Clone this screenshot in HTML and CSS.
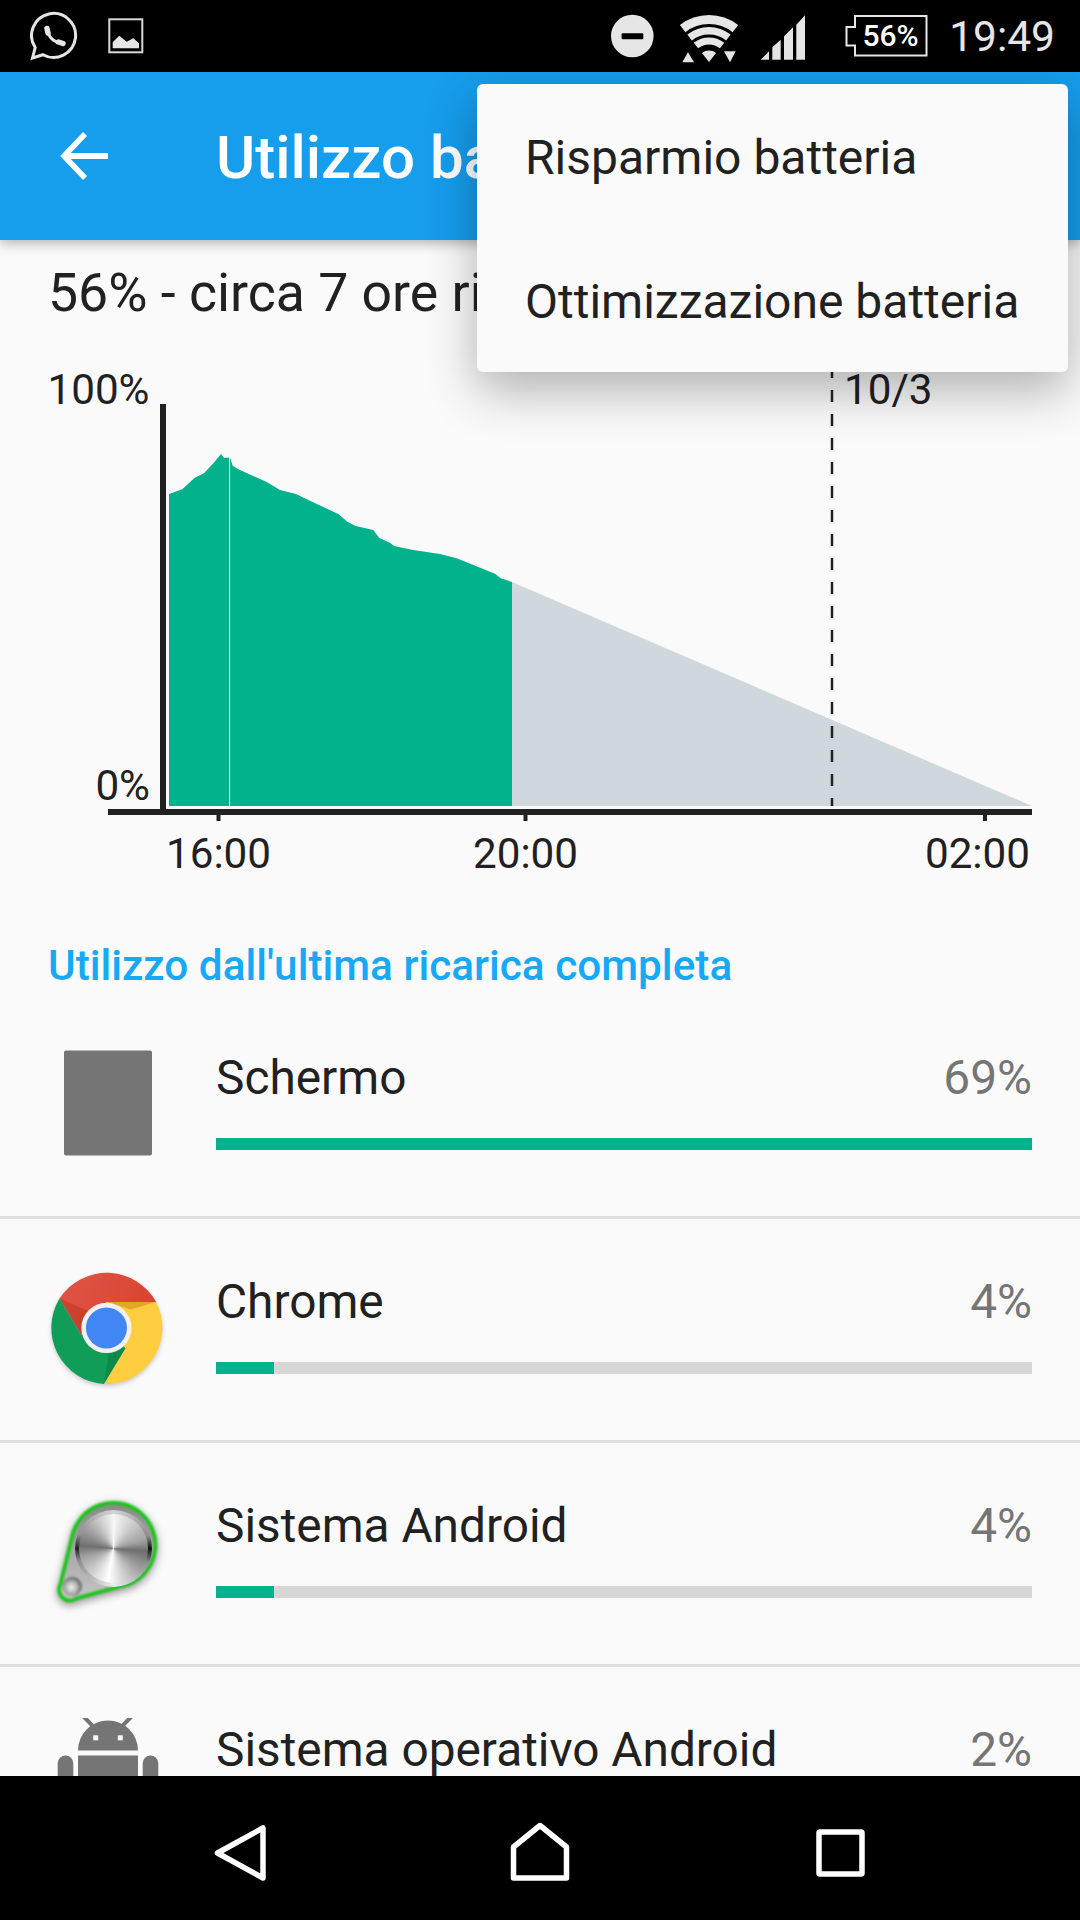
FILE: index.html
```html
<!DOCTYPE html>
<html>
<head>
  <meta charset="utf-8">
  <link rel="stylesheet" href="styles.css">
</head>
<body>
  <div class="screen">

    <!-- Status bar -->
    <div class="status-bar">
      <svg class="st-icon" width="48" height="56" viewBox="30 8 48 56">
        <path d="M32.5 58 L35.2 47.5 A22 22 0 1 1 43 54.7 Z" fill="none" stroke="#e6e6e6" stroke-width="3" stroke-linejoin="miter"/>
        <path d="M47.5 29.5 C48 37 54 42.5 62 43" fill="none" stroke="#e6e6e6" stroke-width="3"/>
        <path d="M47 28.5 L48 33 M58.5 42 L63 43.5" stroke="#e6e6e6" stroke-width="5.5" stroke-linecap="round"/>
      </svg>
      <svg class="st-icon st-image" width="36" height="56" viewBox="108 8 36 56">
        <rect x="109.3" y="19.3" width="33" height="33" fill="none" stroke="#d8d8d8" stroke-width="2"/>
        <path d="M112.7 48.3 V42.3 L119.3 35.7 L126.7 41.7 L133.3 38.3 L139 43.3 V48.3 Z" fill="#e6e6e6"/>
      </svg>

      <svg class="st-icon st-dnd" width="44" height="56" viewBox="611 8 44 56">
        <circle cx="633.3" cy="36" r="21.3" fill="#e6e6e6"/>
        <rect x="622.6" y="33.3" width="21.7" height="6" rx="1" fill="#000"/>
      </svg>
      <svg class="st-icon st-wifi" width="60" height="56" viewBox="680 8 60 56" fill="#e6e6e6">
        <path d="M680.9 25.1 A47 47 0 0 1 739.1 25.1 L733.6 32.2 A38 38 0 0 0 686.4 32.2 Z"/>
        <path d="M688.3 34.5 A35 35 0 0 1 731.7 34.5 L727.1 40.4 A27.5 27.5 0 0 0 692.9 40.4 Z"/>
        <path d="M694.8 42.8 A24.5 24.5 0 0 1 725.2 42.8 L720.9 48.3 A17.5 17.5 0 0 0 699.1 48.3 Z"/>
        <path d="M702.9 53 A11.5 11.5 0 0 1 717.1 53 L710 62 Z"/>
        <path d="M683.3 62.3 H695 L689 52.3 Z"/>
        <path d="M725 51.3 H736.7 L731 62.3 Z"/>
      </svg>
      <svg class="st-icon st-signal" width="46" height="56" viewBox="761 8 46 56" fill="#e6e6e6">
        <path d="M761.7 59.7 L770 51.3 V59.7 Z"/>
        <path d="M773.3 59.7 V47.3 L781.7 39.7 V59.7 Z"/>
        <path d="M785 59.7 V36.3 L794 27.3 V59.7 Z"/>
        <path d="M797.3 59.7 V24.7 L806 15.3 V59.7 Z"/>
      </svg>
      <svg class="st-icon st-battery" width="84" height="56" viewBox="846 8 84 56">
        <path d="M856 16 H927.5 V55.5 H856 V45.5 H847.5 V27 H856 Z" fill="none" stroke="#e6e6e6" stroke-width="2"/>
        <text class="battery-text" x="891.5" y="46" text-anchor="middle">56%</text>
      </svg>
      <div class="clock">19:49</div>
    </div>

    <!-- App bar -->
    <div class="app-bar">
      <svg class="back-arrow" width="72" height="72" viewBox="48 120 72 72">
        <path d="M108 156 H66" fill="none" stroke="#fff" stroke-width="6"/>
        <path d="M85 134 L64 156 L85 178" fill="none" stroke="#fff" stroke-width="5.5"/>
      </svg>
      <div class="app-title">Utilizzo batteria</div>
    </div>

    <div class="content">
      <div class="summary">56% - circa 7 ore rimanenti</div>

      <!-- Battery chart, viewBox uses screen coords -->
      <svg class="chart" width="1080" height="520" viewBox="0 360 1080 520">
        <polygon points="512,582 1032,806 512,806" fill="#cfd8dc"/>
        <polygon fill="#02b28c" points="169,494 182.3,489.3 194.7,477.7 204,473.3 213.3,463.3 221,454 224,457.7 229,457.7 230.3,458.3 232.7,465.7 238.3,469.3 266.7,482 280,490 296,494 306.7,499.3 338.3,514 347.3,521.7 355.7,526 373.3,530 379.3,538 390,542.7 394,546 413.3,550 440,554 456.7,558.3 495,573.7 500.7,578.3 512,582 512,806 169,806"/>
        <line x1="229.6" y1="458" x2="229.6" y2="806" stroke="#fafafa" stroke-width="1"/>
        <line x1="832" y1="366" x2="832" y2="806" stroke="#212121" stroke-width="2.5" stroke-dasharray="12 12"/>
        <rect x="160" y="404" width="6" height="405" fill="#212121"/>
        <rect x="108" y="809" width="924" height="6" fill="#212121"/>
        <rect x="216.5" y="815" width="4" height="6" fill="#212121"/>
        <rect x="523.5" y="815" width="4" height="6" fill="#212121"/>
        <rect x="983" y="815" width="4" height="6" fill="#212121"/>
        <text class="chart-label" x="149.5" y="404" text-anchor="end">100%</text>
        <text class="chart-label" x="150" y="800" text-anchor="end">0%</text>
        <text class="chart-label" x="844" y="404">10/3</text>
        <text class="chart-label" x="218.5" y="868" text-anchor="middle">16:00</text>
        <text class="chart-label" x="525.5" y="868" text-anchor="middle">20:00</text>
        <text class="chart-label" x="1030" y="868" text-anchor="end">02:00</text>
      </svg>

      <div class="section-title">Utilizzo dall'ultima ricarica completa</div>

      <div class="usage-row">
        <div class="usage-icon">
          <svg width="120" height="120" viewBox="0 0 120 120">
            <rect x="16" y="4.5" width="88" height="105" rx="2" fill="#757575"/>
          </svg>
        </div>
        <div class="usage-body">
          <div class="usage-head"><span>Schermo</span><span class="usage-pct">69%</span></div>
          <div class="usage-track"><div class="usage-fill" style="width: 100%;"></div></div>
        </div>
      </div>

      <div class="usage-row">
        <div class="usage-icon">
          <svg class="chrome-icon" width="120" height="120" viewBox="1.5 1.5 117 117">
            <defs>
              <linearGradient id="chrome-red" x1="0" y1="0" x2="1" y2="0.3">
                <stop offset="0" stop-color="#e05546"/>
                <stop offset="1" stop-color="#d94432"/>
              </linearGradient>
            </defs>
            <path d="M12.7 29.3 A55 55 0 0 1 107 32.7 L58.5 32.7 L58.5 58 L33.7 64.3 Z" fill="url(#chrome-red)"/>
            <path d="M107 32.7 A55 55 0 0 1 56 112.7 L77 77.7 L58.5 58 L58.5 32.7 Z" fill="#ffcd40"/>
            <path d="M56 112.7 A55 55 0 0 1 12.7 29.3 L33.7 64.3 L58.5 58 L77 77.7 Z" fill="#0f9d58"/>
            <path d="M12.7 29.3 L33.7 64.3 L42 42 Z" fill="#a52714" opacity="0.35"/>
            <path d="M58.5 32.7 H107 L82 40 Z" fill="#c77f12" opacity="0.5"/>
            <path d="M56 112.7 L77 77.7 L62 76 Z" fill="#0b5d33" opacity="0.3"/>
            <circle cx="58.5" cy="58" r="24.5" fill="#f1f1f1"/>
            <circle cx="58.5" cy="58" r="20" fill="#4285f4"/>
          </svg>
        </div>
        <div class="usage-body">
          <div class="usage-head"><span>Chrome</span><span class="usage-pct">4%</span></div>
          <div class="usage-track"><div class="usage-fill" style="width: 7.1%;"></div></div>
        </div>
      </div>

      <div class="usage-row">
        <div class="usage-icon metal-icon">
          <svg class="metal-body" width="120" height="120" viewBox="0 0 120 120">
            <defs>
              <radialGradient id="knob" cx="45%" cy="55%" r="60%">
                <stop offset="0" stop-color="#f4f4f4"/>
                <stop offset="0.6" stop-color="#a8a8a8"/>
                <stop offset="1" stop-color="#444"/>
              </radialGradient>
              <linearGradient id="metal-fill" x1="0" y1="0" x2="0" y2="1">
                <stop offset="0" stop-color="#8a8a8a"/>
                <stop offset="1" stop-color="#c6c6c6"/>
              </linearGradient>
            </defs>
            <path d="M24.5 41 A42 42 0 1 1 80.3 90 L29 104 A11 11 0 0 1 12.5 90 Z" fill="url(#metal-fill)" stroke="#10c810" stroke-width="3.5"/>
            <circle cx="24.3" cy="92.5" r="9.5" fill="url(#knob)"/>
          </svg>
          <div class="metal-disc"></div>
        </div>
        <div class="usage-body">
          <div class="usage-head"><span>Sistema Android</span><span class="usage-pct">4%</span></div>
          <div class="usage-track"><div class="usage-fill" style="width: 7.1%;"></div></div>
        </div>
      </div>

      <div class="usage-row">
        <div class="usage-icon">
          <svg width="120" height="120" viewBox="48 1717.5 120 120" fill="#757575">
            <path d="M78 1750 A30 30 0 0 1 138 1750 Z"/>
            <path d="M84 1716.5 L91.7 1724.3 M131 1716.5 L123.3 1724.3" stroke="#757575" stroke-width="4" stroke-linecap="round"/>
            <rect x="93.2" y="1734.8" width="5" height="5" fill="#fafafa"/>
            <rect x="117.8" y="1734.8" width="5" height="5" fill="#fafafa"/>
            <rect x="78" y="1755" width="60" height="60"/>
            <rect x="57.7" y="1755" width="15.6" height="50" rx="7.8"/>
            <rect x="142.7" y="1755" width="15.6" height="50" rx="7.8"/>
          </svg>
        </div>
        <div class="usage-body">
          <div class="usage-head"><span>Sistema operativo Android</span><span class="usage-pct">2%</span></div>
          <div class="usage-track"><div class="usage-fill" style="width: 4%;"></div></div>
        </div>
      </div>
    </div>

    <!-- Navigation bar -->
    <div class="nav-bar">
      <svg width="120" height="144" viewBox="180 1776 120 144">
        <path d="M263 1828 V1878 L217.5 1853 Z" class="nav-shape"/>
      </svg>
      <svg width="120" height="144" viewBox="480 1776 120 144">
        <path d="M513.5 1878 V1847 L540 1825.5 L566.5 1847 V1878 Z" class="nav-shape"/>
      </svg>
      <svg width="120" height="144" viewBox="780 1776 120 144">
        <rect x="819" y="1832" width="43" height="42" rx="1" class="nav-shape"/>
      </svg>
    </div>

    <!-- Overflow menu -->
    <div class="menu">
      <div class="menu-item">Risparmio batteria</div>
      <div class="menu-item">Ottimizzazione batteria</div>
    </div>
  </div>
</body>
</html>
```

FILE: styles.css
```css
body {
  margin: 0;
  background: #fafafa;
}

.screen {
  position: relative;
  display: flex;
  flex-direction: column;
  width: 1080px;
  height: 1920px;
  overflow: hidden;
  background: #fafafa;
  font-family: 'Roboto', sans-serif;
  color: #212121;
}

/* Status bar */
.status-bar {
  display: flex;
  align-items: center;
  flex: none;
  height: 72px;
  padding: 0 25px 0 30px;
  box-sizing: border-box;
  background: #000;
}

.st-icon {
  display: block;
  flex: none;
}

.st-image {
  margin-left: 30px;
}

.st-dnd {
  margin-left: auto;
}

.st-wifi {
  margin-left: 25px;
}

.st-signal {
  margin-left: 21px;
}

.st-battery {
  margin-left: 39px;
}

.battery-text {
  font-size: 30px;
  font-weight: 500;
  fill: #fff;
}

.clock {
  margin-left: 20px;
  font-size: 42.5px;
  color: #e6e6e6;
}

/* App bar */
.app-bar {
  position: relative;
  z-index: 1;
  display: flex;
  align-items: center;
  flex: none;
  height: 168px;
  padding-left: 48px;
  box-sizing: border-box;
  background: #169dec;
  box-shadow: 0 3px 12px rgba(0, 0, 0, 0.3);
}

.back-arrow {
  display: block;
}

.app-title {
  margin-left: 96px;
  padding-top: 3px;
  font-size: 60px;
  font-weight: 500;
  color: #fff;
}

.content {
  flex: 1;
  min-height: 0;
  overflow: hidden;
}

.summary {
  height: 120px;
  padding: 18px 0 0 48px;
  box-sizing: border-box;
  font-size: 53.6px;
  line-height: 70px;
}

.chart {
  display: block;
}

.chart-label {
  font-size: 42.2px;
  fill: #212121;
}

.section-title {
  height: 115px;
  padding: 61px 0 0 48px;
  box-sizing: border-box;
  font-size: 42.3px;
  font-weight: 500;
  line-height: 50px;
  color: #17a9f5;
}

/* Usage list */
.usage-row {
  display: flex;
  align-items: center;
  height: 224px;
  box-sizing: border-box;
  border-bottom: 3px solid #dedede;
}

.usage-icon {
  position: relative;
  flex: none;
  width: 120px;
  height: 120px;
  margin: 0 48px;
}

.usage-icon svg {
  display: block;
}

.chrome-icon {
  filter: drop-shadow(0 2px 2px rgba(0, 0, 0, 0.2));
}

.metal-body {
  filter: blur(0.8px) drop-shadow(0 3px 4px rgba(0, 0, 0, 0.45));
}

.metal-disc {
  position: absolute;
  left: 27px;
  top: 16px;
  width: 77px;
  height: 77px;
  border-radius: 50%;
  filter: blur(0.7px);
  background: conic-gradient(from 0deg, #d4d4d4, #8e8e8e 70deg, #111 90deg, #8e8e8e 112deg, #ececec 180deg, #8e8e8e 250deg, #222 270deg, #8e8e8e 292deg, #d4d4d4);
}

.metal-disc::before {
  content: "";
  position: absolute;
  inset: 4px;
  border-radius: 50%;
  background: conic-gradient(from 0deg, #f6f6f6, #a2a2a2 75deg, #6e6e6e 95deg, #d8d8d8 165deg, #fff 190deg, #a0a0a0 255deg, #707070 275deg, #dcdcdc 345deg, #f6f6f6);
}

.usage-body {
  flex: 1;
  padding: 0 48px 14px 0;
}

.usage-head {
  display: flex;
  justify-content: space-between;
  font-size: 47.8px;
  line-height: 60px;
}

.usage-pct {
  color: #757575;
}

.usage-track {
  height: 12px;
  margin-top: 30px;
  background: #d6d6d6;
}

.usage-fill {
  height: 100%;
  background: #02b28c;
}

/* Navigation bar */
.nav-bar {
  display: flex;
  justify-content: space-between;
  flex: none;
  height: 144px;
  padding: 0 180px;
  box-sizing: border-box;
  background: #000;
}

.nav-bar svg {
  display: block;
}

.nav-shape {
  fill: none;
  stroke: #fff;
  stroke-width: 5.5;
  stroke-linejoin: round;
}

/* Overflow menu */
.menu {
  position: absolute;
  z-index: 2;
  left: 477px;
  top: 84px;
  width: 591px;
  border-radius: 6px;
  background: #fafafa;
  box-shadow: 0 18px 50px rgba(0, 0, 0, 0.3);
}

.menu-item {
  height: 144px;
  padding-left: 48px;
  font-size: 48px;
  line-height: 148px;
}
```
